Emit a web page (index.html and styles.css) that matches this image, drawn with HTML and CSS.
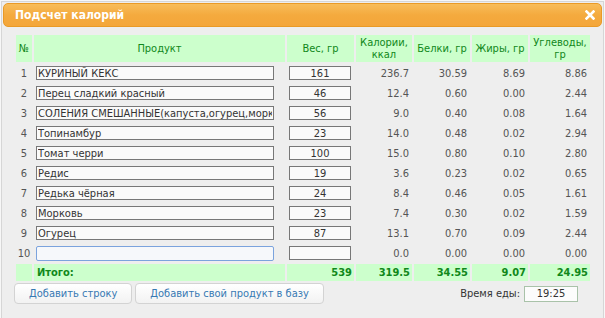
FILE: index.html
```html
<!DOCTYPE html>
<html lang="ru">
<head>
<meta charset="utf-8">
<title>Подсчет калорий</title>
<link rel="stylesheet" href="styles.css">
</head>
<body>
<div class="dialog">
  <div class="titlebar">
    <span class="title">Подсчет калорий</span>
    <span class="close">
      <svg width="10" height="10" viewBox="0 0 10 10"><path d="M1.5 1.5 L8.5 8.5 M8.5 1.5 L1.5 8.5" stroke="#fff" stroke-width="2.6" stroke-linecap="square"/></svg>
    </span>
  </div>
  <div class="content">
    <table class="calc">
      <colgroup>
        <col class="c-num"><col class="c-prod"><col class="c-w"><col class="c-cal"><col class="c-b"><col class="c-f"><col class="c-u">
      </colgroup>
      <thead>
        <tr>
          <th>№</th><th>Продукт</th><th>Вес, гр</th><th>Калории,<br>ккал</th><th>Белки, гр</th><th>Жиры, гр</th><th>Углеводы,<br>гр</th>
        </tr>
      </thead>
      <tbody>
        <tr><td class="n">1</td><td class="p"><input class="prod" value="КУРИНЫЙ КЕКС"></td><td class="w"><input class="wt" value="161"></td><td class="v">236.7</td><td class="v">30.59</td><td class="v">8.69</td><td class="v">8.86</td></tr>
        <tr><td class="n">2</td><td class="p"><input class="prod" value="Перец сладкий красный"></td><td class="w"><input class="wt" value="46"></td><td class="v">12.4</td><td class="v">0.60</td><td class="v">0.00</td><td class="v">2.44</td></tr>
        <tr><td class="n">3</td><td class="p"><input class="prod" value="СОЛЕНИЯ СМЕШАННЫЕ(капуста,огурец,морковь,перец)"></td><td class="w"><input class="wt" value="56"></td><td class="v">9.0</td><td class="v">0.40</td><td class="v">0.08</td><td class="v">1.64</td></tr>
        <tr><td class="n">4</td><td class="p"><input class="prod" value="Топинамбур"></td><td class="w"><input class="wt" value="23"></td><td class="v">14.0</td><td class="v">0.48</td><td class="v">0.02</td><td class="v">2.94</td></tr>
        <tr><td class="n">5</td><td class="p"><input class="prod" value="Томат черри"></td><td class="w"><input class="wt" value="100"></td><td class="v">15.0</td><td class="v">0.80</td><td class="v">0.10</td><td class="v">2.80</td></tr>
        <tr><td class="n">6</td><td class="p"><input class="prod" value="Редис"></td><td class="w"><input class="wt" value="19"></td><td class="v">3.6</td><td class="v">0.23</td><td class="v">0.02</td><td class="v">0.65</td></tr>
        <tr><td class="n">7</td><td class="p"><input class="prod" value="Редька чёрная"></td><td class="w"><input class="wt" value="24"></td><td class="v">8.4</td><td class="v">0.46</td><td class="v">0.05</td><td class="v">1.61</td></tr>
        <tr><td class="n">8</td><td class="p"><input class="prod" value="Морковь"></td><td class="w"><input class="wt" value="23"></td><td class="v">7.4</td><td class="v">0.30</td><td class="v">0.02</td><td class="v">1.59</td></tr>
        <tr><td class="n">9</td><td class="p"><input class="prod" value="Огурец"></td><td class="w"><input class="wt" value="87"></td><td class="v">13.1</td><td class="v">0.70</td><td class="v">0.09</td><td class="v">2.44</td></tr>
        <tr><td class="n">10</td><td class="p"><input class="prod focus" value=""></td><td class="w"><input class="wt" value=""></td><td class="v">0.0</td><td class="v">0.00</td><td class="v">0.00</td><td class="v">0.00</td></tr>
      </tbody>
      <tfoot>
        <tr><td></td><td class="label">Итого:</td><td class="t">539</td><td class="t">319.5</td><td class="t">34.55</td><td class="t">9.07</td><td class="t">24.95</td></tr>
      </tfoot>
    </table>
    <div class="footer">
      <div class="buttons">
        <button class="btn">Добавить строку</button>
        <button class="btn">Добавить свой продукт в базу</button>
      </div>
      <div class="time">
        <span class="time-label">Время еды:</span>
        <input class="time-input" value="19:25">
      </div>
    </div>
  </div>
</div>
</body>
</html>
```

FILE: styles.css
```css
html, body {
  margin: 0;
  padding: 0;
  background: #f7f7f7;
}
body {
  font-family: "DejaVu Sans Condensed", "DejaVu Sans", sans-serif;
  font-stretch: condensed;
  font-size: 11px;
  color: #333;
}
.dialog {
  margin: 1px 1px 0 1px;
  height: 314px;
  border: 1px solid #d6d6d6;
  padding: 1px;
  background: #eeeeee;
  display: flex;
  flex-direction: column;
}
.titlebar {
  height: 22px;
  border: 1px solid #e99a26;
  border-radius: 5px;
  background: linear-gradient(#f8bd5a, #f4aa3e 50%, #f4a63a);
  display: flex;
  align-items: center;
  justify-content: space-between;
  padding: 0 6px 0 11px;
  flex: none;
}
.title {
  color: #fff;
  font-weight: bold;
  font-size: 12px;
}
.close {
  display: flex;
  width: 10px;
  height: 10px;
}
.content {
  padding: 6px 0 0 11px;
}
.calc {
  border-collapse: separate;
  border-spacing: 2px;
  table-layout: fixed;
  width: 578px;
}
.c-num { width: 16px; }
.c-prod { width: 251px; }
.c-w { width: 67px; }
.c-cal { width: 56px; }
.c-b { width: 56px; }
.c-f { width: 56px; }
.c-u { width: 60px; }
th {
  background: #ccffcc;
  color: #10881a;
  font-weight: normal;
  height: 27px;
  line-height: 12px;
  padding: 0;
  text-align: center;
  vertical-align: middle;
}
td {
  padding: 0;
  height: 18px;
  vertical-align: middle;
}
td.n {
  text-align: center;
  color: #555;
}
td.p { padding-left: 2px; }
td.w { padding-left: 2px; }
td.v {
  text-align: right;
  padding-right: 3px;
  color: #555;
}
input {
  font-family: inherit;
  font-stretch: condensed;
  font-size: 11px;
  margin: 0;
  box-sizing: border-box;
  height: 14px;
  border: 1px solid #777;
  background: #fafafa;
  color: #333;
  padding: 0 1px;
  outline: none;
  display: block;
}
.prod { width: 238px; }
.wt { width: 62px; text-align: center; }
.prod.focus {
  border-color: #7ba3dd;
  border-radius: 2px;
  height: 15px;
  background: #f6f8fb;
}
tfoot td {
  background: #ccffcc;
  color: #10881a;
  font-weight: bold;
  height: 17px;
}
tfoot td.label { padding-left: 3px; }
tfoot td.t {
  text-align: right;
  padding-right: 2px;
}
.footer {
  display: flex;
  justify-content: space-between;
  align-items: center;
  padding: 0 24px 0 0;
}
.buttons {
  display: flex;
  gap: 3px;
}
.btn {
  font-family: inherit;
  font-stretch: condensed;
  font-size: 11px;
  height: 21px;
  padding: 0 14px;
  border: 1px solid #d3d3d3;
  border-radius: 4px;
  background: linear-gradient(#ffffff, #f2f2f2);
  color: #3779b3;
}
.time {
  display: flex;
  align-items: center;
  gap: 4px;
}
.time-label { color: #333; }
.time-input {
  width: 54px;
  height: 16px;
  border: 1px solid #a9c2a9;
  background: #fcfcfc;
  text-align: center;
}
```
